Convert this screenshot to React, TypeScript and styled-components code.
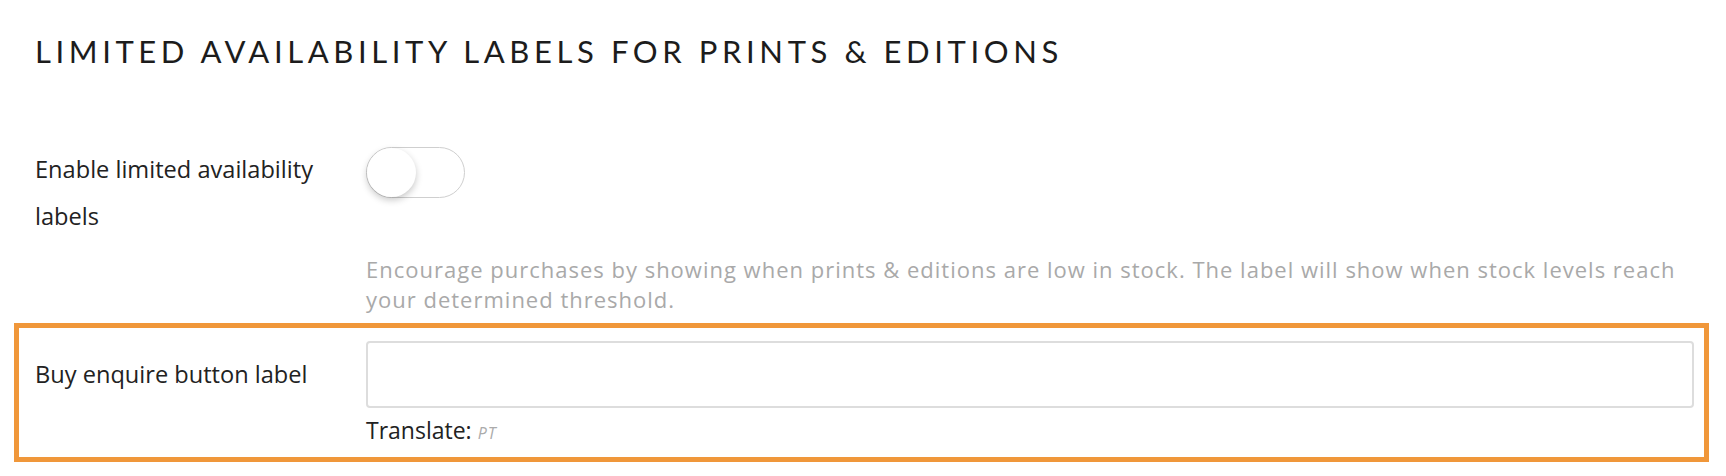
import React from "react";
import styled, { createGlobalStyle } from "styled-components";

const GlobalStyle = createGlobalStyle`
  html, body { margin: 0; padding: 0; background: #ffffff; }
  body { font-family: "Open Sans", "Liberation Sans", sans-serif; color: #222222; }
  * { box-sizing: border-box; }
`;

const Page = styled.div`
  padding: 29px 17px 0 14px;
  width: 1726px;
`;

const Title = styled.h2`
  margin: 0 0 68px 21px;
  font-family: "Lato", "Liberation Sans", sans-serif;
  font-size: 31px;
  line-height: 44px;
  font-weight: 400;
  letter-spacing: 4.6px;
  color: #1c1c1c;
  text-transform: uppercase;
`;

const FieldRow = styled.div<{ $highlight?: boolean }>`
  display: grid;
  grid-template-columns: 331px 1fr;
  align-items: start;
  border: 5px solid ${(p) => (p.$highlight ? "#F0973A" : "transparent")};
  padding: ${(p) => (p.$highlight ? "13px 10px 8px 16px" : "0 10px 0 16px")};
`;

const Label = styled.div<{ $center?: boolean }>`
  font-size: 23.6px;
  line-height: 47px;
  color: #222222;
  padding-top: ${(p) => (p.$center ? "10px" : "0")};
  padding-right: 20px;
`;

const Content = styled.div`
  display: flex;
  flex-direction: column;
  align-items: flex-start;
`;

const ToggleTrack = styled.div`
  width: 99px;
  height: 51px;
  margin-top: 1px;
  border-radius: 26px;
  border: 1.5px solid #cfcfcf;
  background: #ffffff;
  display: flex;
  align-items: center;
`;

const ToggleKnob = styled.div`
  width: 49px;
  height: 49px;
  border-radius: 50%;
  background: #ffffff;
  box-shadow: 0 3px 7px rgba(0, 0, 0, 0.22);
`;

const Help = styled.p`
  margin: 4px 0 4px 0;
  font-size: 22px;
  letter-spacing: 1px;
  line-height: 30px;
  color: #a9a9a9;
  white-space: nowrap;
`;

const HelpLine = styled.span`
  display: block;
`;

const TextInput = styled.input`
  width: 100%;
  height: 67px;
  border: 2px solid #dddddd;
  border-radius: 4px;
  background: #ffffff;
  outline: none;
  font-family: inherit;
  font-size: 22px;
  padding: 0 14px;
`;

const Translate = styled.div`
  margin-top: 6px;
  font-size: 23px;
  line-height: 32px;
  color: #222222;
`;

const Lang = styled.span`
  font-size: 16px;
  font-style: italic;
  color: #ababab;
  letter-spacing: 1px;
  margin-left: 6px;
`;

export default function App() {
  return (
    <>
      <GlobalStyle />
      <Page>
        <Title>Limited availability labels for prints &amp; editions</Title>
        <FieldRow>
          <Label>Enable limited availability labels</Label>
          <Content>
            <ToggleTrack>
              <ToggleKnob />
            </ToggleTrack>
          </Content>
        </FieldRow>
        <FieldRow>
          <div />
          <Help>
            <HelpLine>
              Encourage purchases by showing when prints &amp; editions are low in stock. The label will show when stock levels reach
            </HelpLine>
            <HelpLine>your determined threshold.</HelpLine>
          </Help>
        </FieldRow>
        <FieldRow $highlight>
          <Label $center>Buy enquire button label</Label>
          <Content>
            <TextInput type="text" />
            <Translate>
              Translate:<Lang>PT</Lang>
            </Translate>
          </Content>
        </FieldRow>
      </Page>
    </>
  );
}
